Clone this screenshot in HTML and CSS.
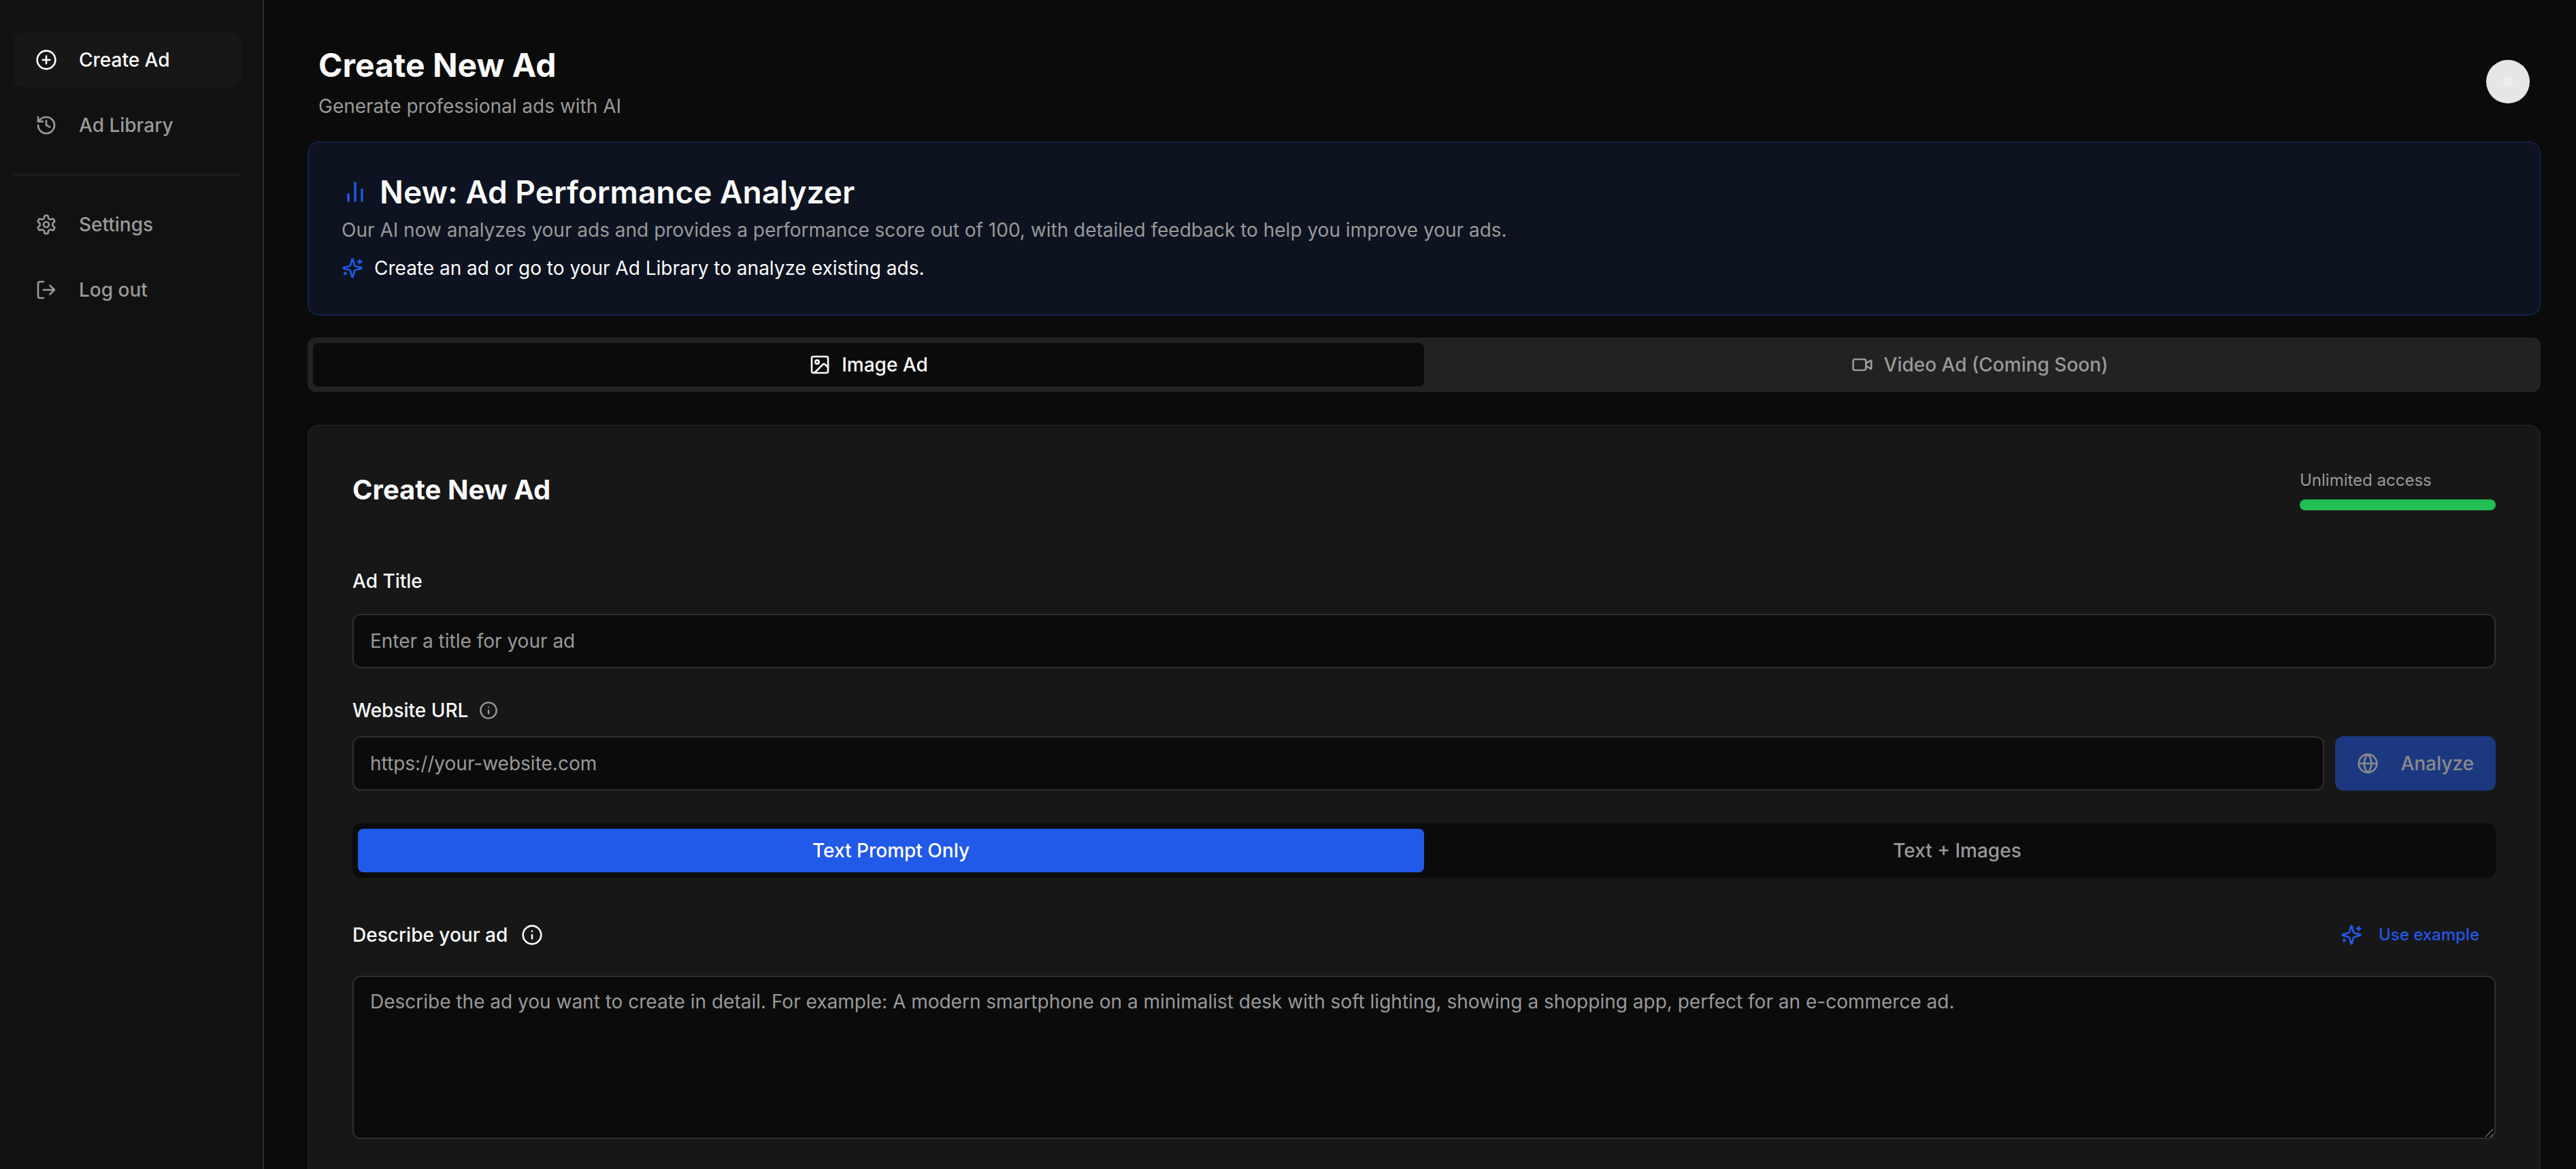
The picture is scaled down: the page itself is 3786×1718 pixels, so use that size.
FILE: index.html
```html
<!DOCTYPE html>
<html lang="en">
<head>
<meta charset="utf-8">
<title>Create New Ad</title>
<meta name="viewport" content="width=device-width, initial-scale=1">
<link rel="stylesheet" href="styles.css">
</head>
<body>
<svg class="sprite" aria-hidden="true">
  <symbol id="sparkles" viewBox="0 0 24 24">
    <path d="M9.937 15.5A2 2 0 0 0 8.5 14.063l-6.135-1.582a.5.5 0 0 1 0-.962L8.5 9.936A2 2 0 0 0 9.937 8.5l1.582-6.135a.5.5 0 0 1 .963 0L14.063 8.5A2 2 0 0 0 15.5 9.937l6.135 1.581a.5.5 0 0 1 0 .964L15.5 14.063a2 2 0 0 0-1.437 1.437l-1.582 6.135a.5.5 0 0 1-.963 0z"/>
    <path d="M20 3v4M22 5h-4M4 17v2M5 18H3"/>
  </symbol>
  <symbol id="info" viewBox="0 0 24 24">
    <circle cx="12" cy="12" r="10"/><path d="M12 16v-4M12 8h.01"/>
  </symbol>
</svg>
<div class="app">
  <aside class="sidebar">
    <nav class="nav" aria-label="Main">
      <a class="nav-link active" href="#create">
        <svg class="icon" viewBox="0 0 24 24"><circle cx="12" cy="12" r="10"/><path d="M8 12h8M12 8v8"/></svg>
        Create Ad
      </a>
      <a class="nav-link" href="#library">
        <svg class="icon" viewBox="0 0 24 24"><path d="M3 12a9 9 0 1 0 9-9 9.75 9.75 0 0 0-6.740 2.740L3 8"/><path d="M3 3v5h5M12 7v5l4 2"/></svg>
        Ad Library
      </a>
    </nav>
    <hr class="divider">
    <nav class="nav" aria-label="Account">
      <a class="nav-link" href="#settings">
        <svg class="icon" viewBox="0 0 24 24"><path d="M12.220 2h-.44a2 2 0 0 0-2 2v.18a2 2 0 0 1-1 1.730l-.43.25a2 2 0 0 1-2 0l-.15-.08a2 2 0 0 0-2.730.73l-.22.38a2 2 0 0 0 .73 2.730l.15.1a2 2 0 0 1 1 1.720v.51a2 2 0 0 1-1 1.740l-.15.09a2 2 0 0 0-.73 2.730l.22.38a2 2 0 0 0 2.730.73l.15-.08a2 2 0 0 1 2 0l.43.25a2 2 0 0 1 1 1.730V20a2 2 0 0 0 2 2h.44a2 2 0 0 0 2-2v-.18a2 2 0 0 1 1-1.730l.43-.25a2 2 0 0 1 2 0l.15.08a2 2 0 0 0 2.730-.73l.22-.39a2 2 0 0 0-.73-2.730l-.15-.08a2 2 0 0 1-1-1.740v-.5a2 2 0 0 1 1-1.740l.15-.09a2 2 0 0 0 .73-2.730l-.22-.38a2 2 0 0 0-2.730-.73l-.15.08a2 2 0 0 1-2 0l-.43-.25a2 2 0 0 1-1-1.730V4a2 2 0 0 0-2-2z"/><circle cx="12" cy="12" r="3"/></svg>
        Settings
      </a>
      <a class="nav-link" href="#logout">
        <svg class="icon" viewBox="0 0 24 24"><path d="M9 21H5a2 2 0 0 1-2-2V5a2 2 0 0 1 2-2h4M16 17l5-5-5-5M21 12H9"/></svg>
        Log out
      </a>
    </nav>
  </aside>

  <main class="main">
    <header class="page-header">
      <div>
        <h1 class="page-title">Create New Ad</h1>
        <p class="page-subtitle">Generate professional ads with AI</p>
      </div>
      <button class="avatar" type="button" aria-label="Account menu"></button>
    </header>

    <section class="banner">
      <h2 class="banner-title">
        <svg class="icon icon-lg accent" viewBox="0 0 24 24"><path d="M18 20V10M12 20V4M6 20v-6"/></svg>
        New: Ad Performance Analyzer
      </h2>
      <p class="banner-text">Our AI now analyzes your ads and provides a performance score out of 100, with detailed feedback to help you improve your ads.</p>
      <p class="banner-tip">
        <svg class="icon accent"><use href="#sparkles"/></svg>
        Create an ad or go to your Ad Library to analyze existing ads.
      </p>
    </section>

    <div class="tabs ad-type" role="tablist" aria-label="Ad type">
      <button class="tab selected" type="button" role="tab" aria-selected="true">
        <svg class="icon" viewBox="0 0 24 24"><rect x="3" y="3" width="18" height="18" rx="2"/><circle cx="9" cy="9" r="2"/><path d="m21 15-3.086-3.086a2 2 0 0 0-2.828 0L6 21"/></svg>
        Image Ad
      </button>
      <button class="tab" type="button" role="tab" aria-selected="false">
        <svg class="icon" viewBox="0 0 24 24"><path d="m16 13 5.223 3.482a.5.5 0 0 0 .777-.416V7.870a.5.5 0 0 0-.752-.432L16 10.500"/><rect x="2" y="6" width="14" height="12" rx="2"/></svg>
        Video Ad (Coming Soon)
      </button>
    </div>

    <form class="card">
      <div class="card-header">
        <h2 class="card-title">Create New Ad</h2>
        <div class="usage">
          <span class="usage-label">Unlimited access</span>
          <div class="usage-bar"></div>
        </div>
      </div>

      <div class="field field-title">
        <label class="label" for="ad-title">Ad Title</label>
        <input class="control" id="ad-title" type="text" placeholder="Enter a title for your ad">
      </div>

      <div class="field field-url">
        <div class="label-row">
          <label class="label" for="ad-url">Website URL</label>
          <svg class="icon icon-sm muted"><use href="#info"/></svg>
        </div>
        <div class="control-row">
          <input class="control" id="ad-url" type="url" placeholder="https://your-website.com">
          <button class="analyze" type="button" disabled>
            <svg class="icon" viewBox="0 0 24 24"><circle cx="12" cy="12" r="10"/><path d="M12 2a14.500 14.500 0 0 0 0 20 14.500 14.500 0 0 0 0-20M2 12h20"/></svg>
            Analyze
          </button>
        </div>
      </div>

      <div class="tabs prompt-type" role="tablist" aria-label="Prompt type">
        <button class="tab selected" type="button" role="tab" aria-selected="true">Text Prompt Only</button>
        <button class="tab" type="button" role="tab" aria-selected="false">Text + Images</button>
      </div>

      <div class="field-prompt">
        <div class="prompt-header">
          <div class="label-row label-row-wide">
            <label class="label" for="ad-prompt">Describe your ad</label>
            <svg class="icon"><use href="#info"/></svg>
          </div>
          <button class="example" type="button">
            <svg class="icon"><use href="#sparkles"/></svg>
            Use example
          </button>
        </div>
        <div class="prompt-box">
          <textarea class="control prompt" id="ad-prompt" placeholder="Describe the ad you want to create in detail. For example: A modern smartphone on a minimalist desk with soft lighting, showing a shopping app, perfect for an e-commerce ad."></textarea>
          <svg class="grip" viewBox="0 0 14 14" aria-hidden="true"><path d="M1 13 12 1M8 13l4-4"/></svg>
        </div>
      </div>
    </form>
  </main>
</div>
</body>
</html>
```
FILE: styles.css
```css
:root {
  --bg: #0b0b0b;
  --surface: #171717;
  --border: #2e2e2e;
  --text: #fafafa;
  --muted: #999999;
  --accent: #2159e9;
}

* { box-sizing: border-box; }

body {
  margin: 0;
  background: var(--bg);
  color: var(--text);
  font-family: Inter, "Liberation Sans", sans-serif;
  font-size: 28px;
  line-height: 40px;
  font-optical-sizing: none;
  -webkit-font-smoothing: antialiased;
}

h1, h2, p { margin: 0; }

button, input, textarea {
  font: inherit;
  color: inherit;
  font-optical-sizing: none;
}

button {
  border: 0;
  padding: 0;
  background: none;
}

.sprite {
  position: absolute;
  width: 0;
  height: 0;
}

.icon {
  flex: none;
  width: 32px;
  height: 32px;
  fill: none;
  stroke: currentColor;
  stroke-width: 2;
  stroke-linecap: round;
  stroke-linejoin: round;
}

.icon-sm { width: 28px; height: 28px; }
.icon-lg { width: 40px; height: 40px; }
.accent { color: var(--accent); }
.muted { color: var(--muted); }

.app {
  display: flex;
  height: 100vh;
}

/* Sidebar */
.sidebar {
  flex: none;
  width: 388px;
  padding: 48px 32px 48px 20px;
  background: #111111;
  border-right: 2px solid var(--border);
}

.nav {
  display: flex;
  flex-direction: column;
  gap: 16px;
}

.nav-link {
  display: flex;
  align-items: center;
  gap: 32px;
  height: 80px;
  padding: 0 32px;
  border-radius: 12px;
  color: var(--muted);
  font-weight: 500;
  text-decoration: none;
}

.nav-link.active {
  background: var(--surface);
  color: #ffffff;
}

.divider {
  height: 2px;
  margin: 32px 0;
  border: 0;
  background: #1f1f1f;
}

/* Main column */
.main {
  flex: 1;
  min-width: 0;
  padding: 64px 52px 64px 64px;
  overflow-y: auto;
  scrollbar-width: none;
}

.page-header {
  display: flex;
  align-items: center;
  justify-content: space-between;
  padding: 0 16px 32px;
}

.page-title {
  font-size: 48px;
  line-height: 64px;
  font-weight: 700;
}

.page-subtitle {
  padding-top: 8px;
  color: var(--muted);
}

.avatar {
  width: 64px;
  height: 64px;
  border-radius: 50%;
  background: radial-gradient(circle, #ededed 7px, #e6e6e6 8px);
}

.banner {
  padding: 48px;
  border: 2px solid #12214b;
  border-radius: 16px;
  background: #0d1320;
}

.banner-title {
  display: flex;
  align-items: center;
  gap: 16px;
  font-size: 46px;
  line-height: 48px;
  font-weight: 600;
}

.banner-text {
  margin-top: 12px;
  color: var(--muted);
}

.banner-tip {
  display: flex;
  align-items: center;
  gap: 16px;
  margin-top: 16px;
}

/* Segmented tabs */
.tabs {
  display: grid;
  grid-template-columns: 1fr 1fr;
  padding: 8px;
  border-radius: 12px;
}

.tab {
  display: flex;
  align-items: center;
  justify-content: center;
  gap: 16px;
  height: 64px;
  border-radius: 8px;
  color: var(--muted);
  font-weight: 500;
}

.ad-type {
  margin: 32px 0 48px;
  background: #222222;
}

.ad-type .selected {
  background: var(--bg);
  color: var(--text);
}

.prompt-type {
  margin: 48px 0;
  background: var(--bg);
}

.prompt-type .selected {
  background: var(--accent);
  color: #ffffff;
}

/* Form card */
.card {
  padding: 64px;
  border: 2px solid #1f1f1f;
  border-radius: 16px;
  background: var(--surface);
}

.card-header {
  display: flex;
  align-items: center;
  justify-content: space-between;
}

.card-title {
  font-size: 40px;
  line-height: 56px;
  font-weight: 700;
}

.usage {
  display: flex;
  flex-direction: column;
  gap: 12px;
  width: 288px;
}

.usage-label {
  color: var(--muted);
  font-size: 24px;
  line-height: 32px;
}

.usage-bar {
  height: 16px;
  border-radius: 8px;
  background: #22be56;
}

.field {
  display: flex;
  flex-direction: column;
}

.field-title {
  gap: 28px;
  margin-top: 84px;
}

.field-url {
  gap: 18px;
  margin-top: 42px;
}

.label { font-weight: 500; }

.label-row {
  display: flex;
  align-items: center;
  gap: 16px;
}

.label-row-wide { gap: 20px; }

.control-row {
  display: flex;
  gap: 16px;
}

.control {
  display: block;
  width: 100%;
  height: 80px;
  padding: 0 24px;
  border: 2px solid var(--border);
  border-radius: 12px;
  background: var(--bg);
}

.control::placeholder {
  color: var(--muted);
  opacity: 1;
}

.analyze {
  display: flex;
  align-items: center;
  gap: 32px;
  padding: 0 32px;
  border-radius: 12px;
  background: var(--accent);
  font-weight: 500;
  opacity: 0.5;
}

.prompt-header {
  display: flex;
  align-items: center;
  justify-content: space-between;
  margin-bottom: 24px;
}

.example {
  display: flex;
  align-items: center;
  gap: 24px;
  height: 72px;
  padding: 0 24px;
  color: var(--accent);
  font-size: 24px;
  font-weight: 500;
}

.prompt-box { position: relative; }

.prompt {
  height: 240px;
  padding: 16px 24px;
  resize: none;
}

/* Resize handle over the corner of the text area */
.grip {
  position: absolute;
  right: 2px;
  bottom: 2px;
  width: 14px;
  height: 14px;
  fill: none;
  stroke: #b4b4b4;
  stroke-width: 1;
}
```
